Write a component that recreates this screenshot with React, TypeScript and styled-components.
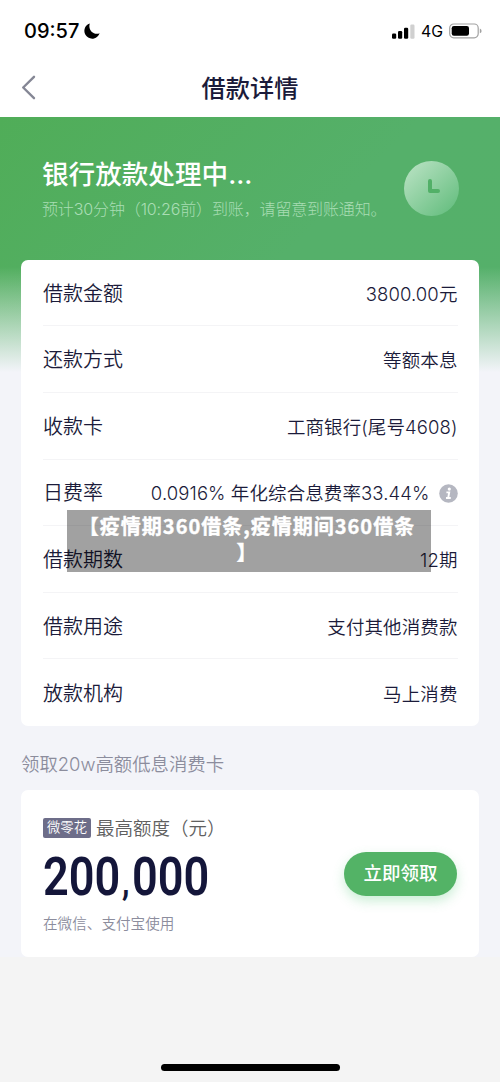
import React from "react";
import styled, { createGlobalStyle } from "styled-components";

const GlobalStyle = createGlobalStyle`
  * { box-sizing: border-box; }
  body {
    margin: 0;
    background: #f4f4f4;
    font-family: Inter, "Noto Sans CJK SC", sans-serif;
    color: #1b1b3a;
  }
`;

const Screen = styled.div`
  width: 500px;
  height: 1082px;
  display: flex;
  flex-direction: column;
  overflow: hidden;
  position: relative;
`;

const StatusBar = styled.header`
  height: 60px;
  flex: none;
  display: flex;
  align-items: center;
  justify-content: space-between;
  padding: 2px 18px 0 24px;
  background: #fff;
  color: #000;
`;

const Time = styled.div`
  display: flex;
  align-items: center;
  gap: 5px;
  font-size: 20px;
  font-weight: 550;
  line-height: 24px;
`;

const Indicators = styled.div`
  display: flex;
  align-items: center;
  font-size: 15.8px;
  gap: 6px;
`;

const NavBar = styled.nav`
  height: 57px;
  flex: none;
  display: grid;
  grid-template-columns: 60px 1fr 60px;
  align-items: center;
  background: #fff;
`;

const BackButton = styled.button`
  border: 0;
  background: none;
  padding: 0 0 2px 21px;
  display: flex;
`;

const PageTitle = styled.h1`
  margin: 0;
  text-align: center;
  font-size: 24.2px;
  line-height: 36px;
  font-weight: 500;
`;

const Content = styled.main`
  height: 840px;
  flex: none;
  padding: 0 21px;
  background:
    linear-gradient(180deg, rgba(243, 244, 249, 0) 0, rgba(243, 244, 249, 0) 150px, #f3f4f9 255px),
    linear-gradient(135deg, #50ad58 0, #55b06a 300px, #54b06a 100%);
`;

const Hero = styled.section`
  height: 143px;
  display: flex;
  align-items: center;
  justify-content: space-between;
  padding: 0 20px 0 21px;
`;

const HeroText = styled.div`
  padding-bottom: 1px;
`;

const HeroTitle = styled.h2`
  margin: 0;
  color: #fff;
  font-size: 26.6px;
  line-height: 38px;
  font-weight: 500;
`;

const HeroNote = styled.p`
  margin: 4px 0 0;
  color: #a9ddb4;
  font-size: 16px;
  font-weight: 300;
  line-height: 24px;
  letter-spacing: -0.13px;
  white-space: nowrap;
`;

const Card = styled.section`
  background: #fff;
  border-radius: 7px;
  padding: 0 21.5px 0 22px;
`;

const Row = styled.div`
  height: 66.6px;
  display: flex;
  align-items: center;
  justify-content: space-between;
  border-bottom: 1px solid #f4f4f6;
  &:first-child { height: 66.4px; }
  &:last-child { height: 66.8px; border-bottom: 0; }
`;

const Label = styled.span`
  font-size: 20px;
  font-weight: 350;
  line-height: 30px;
  padding-top: 2px;
`;

const Value = styled.span`
  display: flex;
  align-items: center;
  gap: 9px;
  font-size: 18.5px;
  font-weight: 350;
  line-height: 28px;
  letter-spacing: 0.1px;
  padding-top: 2px;
`;

const SectionTitle = styled.h3`
  margin: 0;
  height: 64px;
  padding-top: 24px;
  color: #8c8d9d;
  font-size: 18.4px;
  line-height: 28px;
  font-weight: 350;
`;

const OfferCard = styled(Card)`
  height: 167px;
  display: flex;
  align-items: center;
  justify-content: space-between;
`;

const OfferHead = styled.div`
  display: flex;
  align-items: center;
  gap: 5px;
  padding-top: 2px;
  color: #606060;
  font-size: 18.5px;
  font-weight: 350;
  line-height: 28px;
`;

const Tag = styled.span`
  width: 48px;
  height: 20px;
  border-radius: 2px;
  background: #6d6d89;
  color: #fff;
  font-size: 13.3px;
  font-weight: 350;
  line-height: 19px;
  text-align: center;
`;

const Amount = styled.div`
  height: 62px;
  font-family: Roboto, sans-serif;
  font-size: 54px;
  font-weight: 600;
  line-height: 70px;
  color: #14163a;
  transform: scaleX(0.835);
  transform-origin: left;
`;

const Separator = styled.span`
  font-size: 38px;
  letter-spacing: 3px;
  margin-left: 2px;
`;

const OfferNote = styled.div`
  margin-top: 9px;
  color: #8c8d9d;
  font-size: 14.6px;
  font-weight: 350;
  line-height: 22px;
`;

const ClaimButton = styled.button`
  width: 113px;
  height: 44px;
  margin-right: 0.5px;
  border: 0;
  border-radius: 22px;
  padding: 0 0 3px;
  background: #53b366;
  box-shadow: 0 5px 12px rgba(83, 200, 120, 0.3);
  color: #fff;
  font: 500 18.5px/41px "Noto Sans CJK SC", sans-serif;
`;

const Footer = styled.footer`
  flex: 1;
  display: flex;
  align-items: flex-end;
  justify-content: center;
  padding-bottom: 11px;
`;

const HomeIndicator = styled.div`
  width: 179px;
  height: 7px;
  border-radius: 4px;
  background: #000;
`;

const Caption = styled.div`
  position: absolute;
  left: 67px;
  top: 510px;
  width: 364px;
  height: 62px;
  padding: 3px 4px 0 0;
  background: rgba(0, 0, 0, 0.37);
  color: #fff;
  font: 700 20px/26px "Noto Sans CJK SC", sans-serif;
  -webkit-text-stroke: 0.4px #fff;
  letter-spacing: 1px;
  text-align: center;
  white-space: nowrap;
`;

const InfoIcon = () => (
  <svg width="19" height="19" viewBox="0 0 19 19">
    <circle cx="9.5" cy="9.5" r="9.3" fill="#b5b7c1" />
    <circle cx="10.3" cy="5.1" r="1.6" fill="#fff" />
    <path d="M7.4 8.4H10.2L9.2 13.9M7 14H11.8" fill="none" stroke="#fff" strokeWidth="1.9" />
  </svg>
);

const rows: { label: string; value: string; info?: boolean }[] = [
  { label: "借款金额", value: "3800.00元" },
  { label: "还款方式", value: "等额本息" },
  { label: "收款卡", value: "工商银行(尾号4608)" },
  { label: "日费率", value: "0.0916% 年化综合息费率33.44%", info: true },
  { label: "借款期数", value: "12期" },
  { label: "借款用途", value: "支付其他消费款" },
  { label: "放款机构", value: "马上消费" },
];

export default function App() {
  return (
    <Screen>
      <GlobalStyle />
      <StatusBar>
        <Time>
          09:57
          <svg width="16" height="16" viewBox="0 0 16 16">
            <path d="M5.8.4A7.8 7.8 0 1 0 15.6 10.2C10 12.4 3.6 7.5 5.8.4Z" fill="#000" />
          </svg>
        </Time>
        <Indicators>
          <svg width="23" height="15" viewBox="0 0 23 15">
            <rect x="0" y="9.5" width="4.2" height="5.2" rx="1.2" />
            <rect x="6" y="7" width="4.2" height="7.7" rx="1.2" />
            <rect x="12" y="3.7" width="4.2" height="11" rx="1.2" />
            <rect x="18.3" y="0.5" width="4.2" height="14.2" rx="1.2" fill="#d0d0d0" />
          </svg>
          4G
          <svg width="33" height="16" viewBox="0 0 33 16">
            <rect x="0.7" y="1" width="28.5" height="13.8" rx="4" fill="none" stroke="#a2a2a2" strokeWidth="1.2" />
            <rect x="2.7" y="3" width="17.3" height="9.8" rx="2.2" />
            <path d="M30.8 5.5Q32.6 6.3 32.6 7.9T30.8 10.3Z" fill="#a2a2a2" />
          </svg>
        </Indicators>
      </StatusBar>
      <NavBar>
        <BackButton aria-label="返回">
          <svg width="15" height="25" viewBox="0 0 15 25">
            <path d="M13 1.8L2.2 12.5L13 23.2" fill="none" stroke="#858795" strokeWidth="2.4" strokeLinecap="round" strokeLinejoin="round" />
          </svg>
        </BackButton>
        <PageTitle>借款详情</PageTitle>
      </NavBar>
      <Content>
        <Hero>
          <HeroText>
            <HeroTitle>银行放款处理中...</HeroTitle>
            <HeroNote>预计30分钟（10:26前）到账，请留意到账通知。</HeroNote>
          </HeroText>
          <svg width="55" height="55" viewBox="0 0 55 55">
            <defs>
              <linearGradient id="clock" x1="0.1" y1="0.1" x2="0.85" y2="0.9">
                <stop offset="0" stopColor="#b4e0bf" />
                <stop offset="1" stopColor="#6ac083" />
              </linearGradient>
            </defs>
            <circle cx="27.5" cy="27.5" r="27.5" fill="url(#clock)" />
            <path d="M26 20V30H34" fill="none" stroke="#52b068" strokeWidth="4" strokeLinecap="round" strokeLinejoin="round" />
          </svg>
        </Hero>
        <Card>
          {rows.map((row) => (
            <Row key={row.label}>
              <Label>{row.label}</Label>
              <Value>
                {row.value}
                {row.info && <InfoIcon />}
              </Value>
            </Row>
          ))}
        </Card>
        <SectionTitle>领取20w高额低息消费卡</SectionTitle>
        <OfferCard>
          <div>
            <OfferHead>
              <Tag>微零花</Tag>
              最高额度（元）
            </OfferHead>
            <Amount>
              200<Separator>,</Separator>000
            </Amount>
            <OfferNote>在微信、支付宝使用</OfferNote>
          </div>
          <ClaimButton>立即领取</ClaimButton>
        </OfferCard>
      </Content>
      <Footer>
        <HomeIndicator />
      </Footer>
      <Caption>
        【疫情期360借条,疫情期间360借条
        <br />】
      </Caption>
    </Screen>
  );
}
